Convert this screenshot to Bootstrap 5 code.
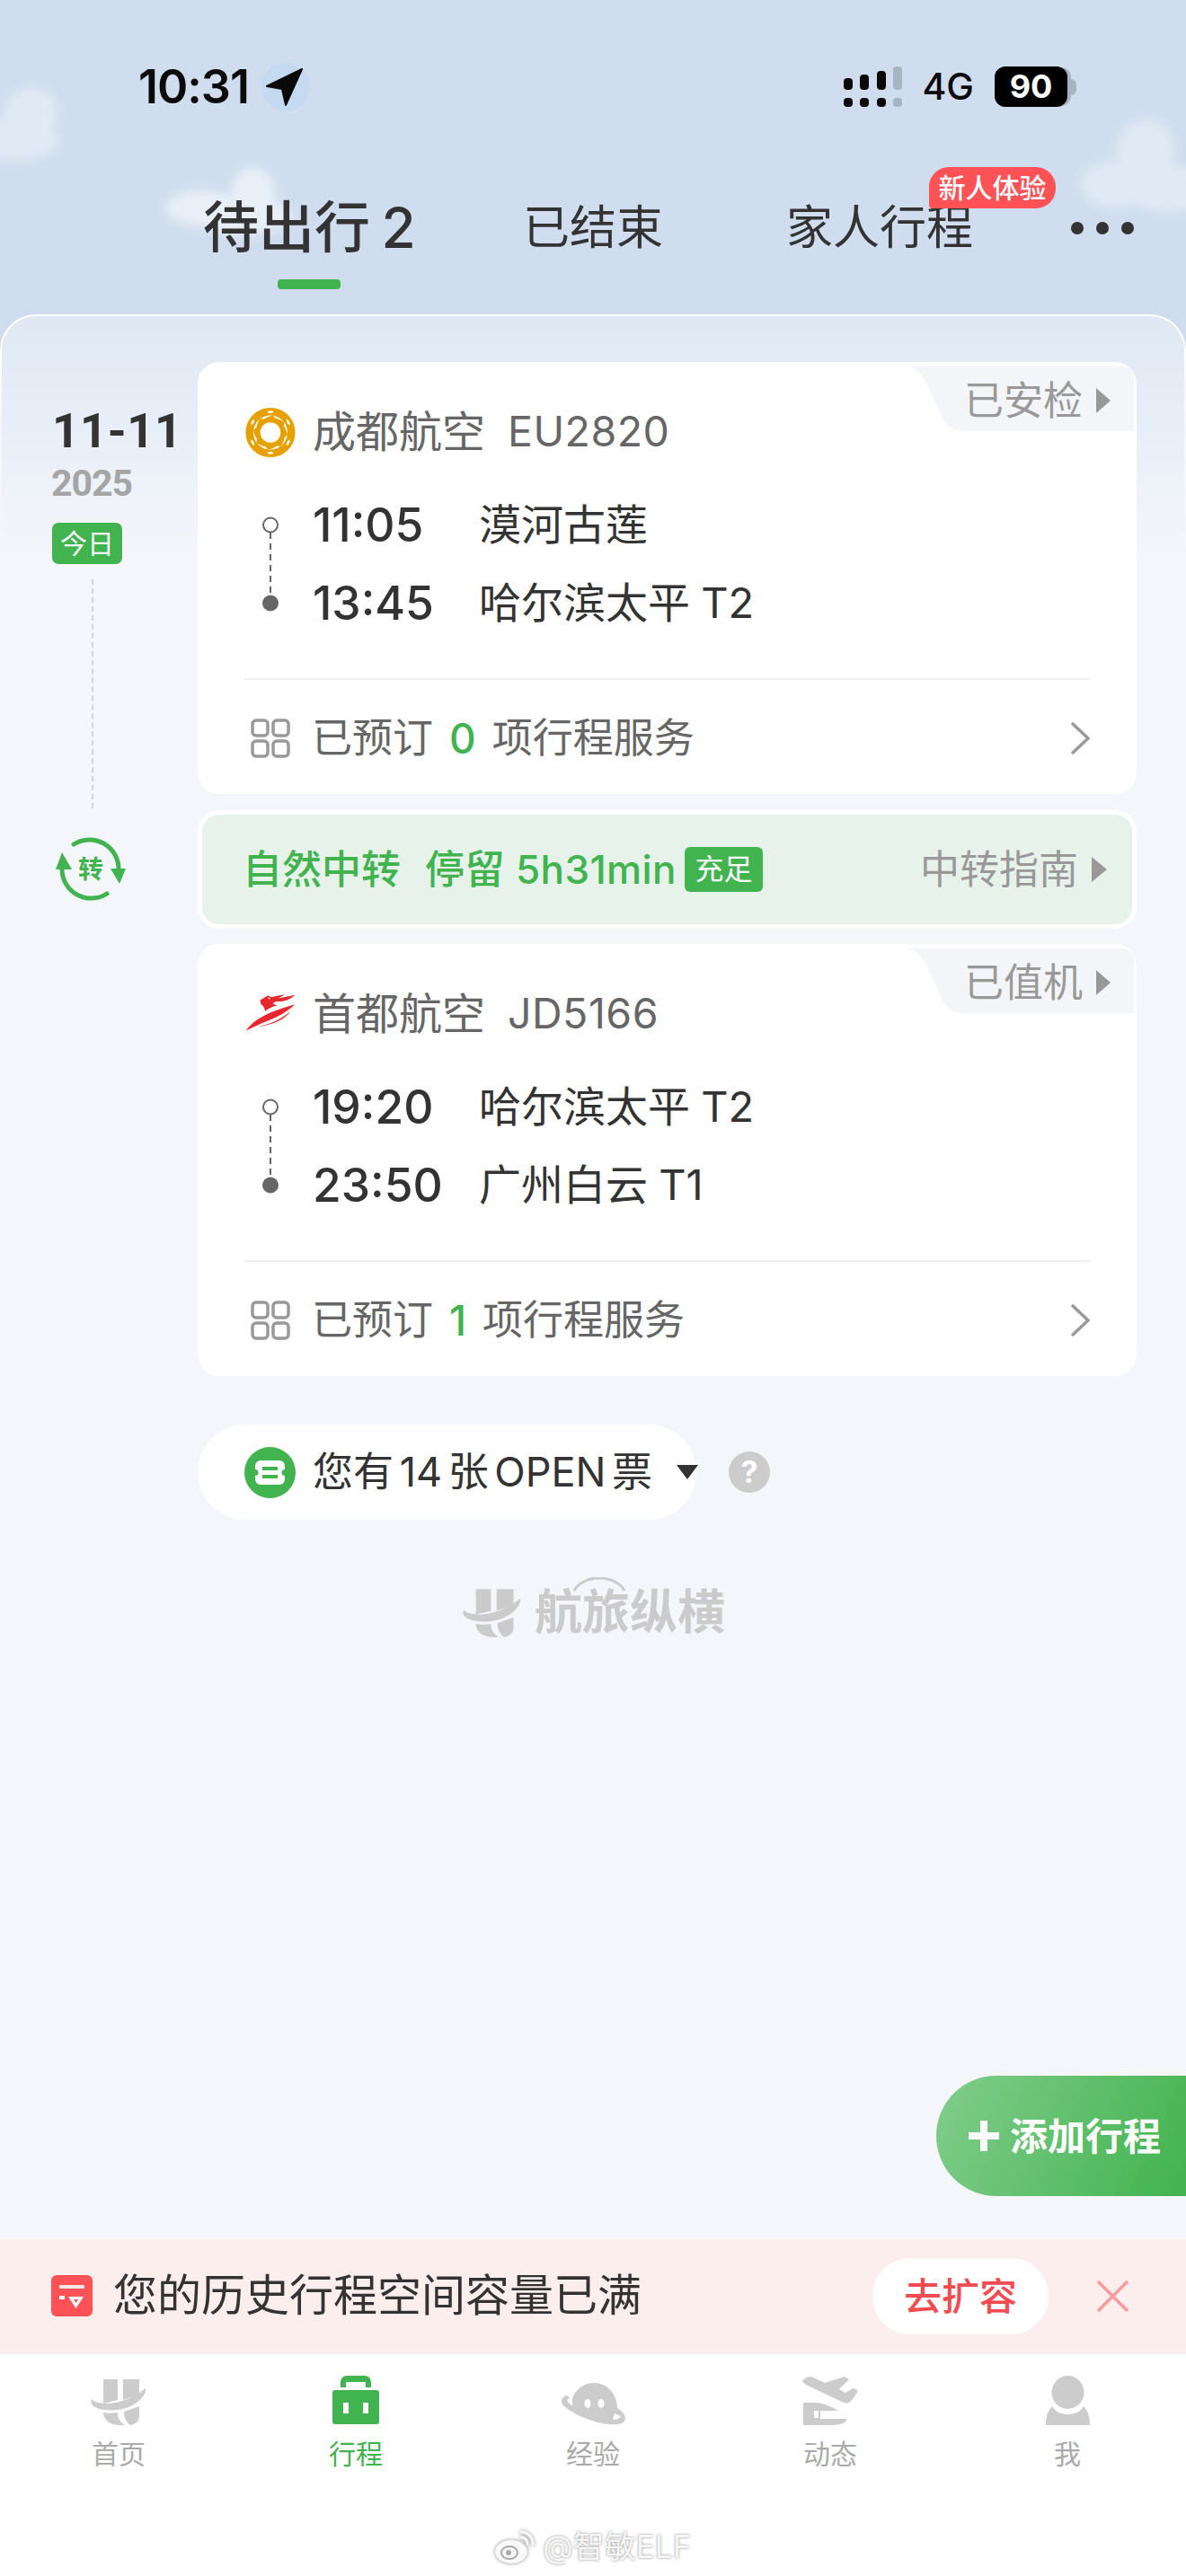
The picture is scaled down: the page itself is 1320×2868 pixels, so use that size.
<!DOCTYPE html>
<html lang="zh">
<head>
    <meta charset="UTF-8">
    <meta name="viewport" content="width=device-width, initial-scale=1.0">
    <title>行程</title>
    <!-- Bootstrap CSS -->
    <link href="https://cdn.jsdelivr.net/npm/bootstrap@5.3.0/dist/css/bootstrap.min.css" rel="stylesheet">
    <style>
        body { margin: 0; background: #fff; font-family: Inter, "Noto Sans CJK SC", sans-serif; color: #333; }
        svg { display: block; flex-shrink: 0; }
        .phone { width: 1320px; height: 2868px; background: #cfddee; overflow: hidden; }
        .sky-clouds { left: 0; top: 0; }

        /* status bar */
        .status-row { padding: 74px 122px 0 154px; height: 119px; }
        .status-time { font-size: 52px; font-weight: 600; color: #0a0a0a; line-height: 45px; letter-spacing: -1px; width: 132px; }
        .status-4g { font-size: 41px; font-weight: 500; color: #0a0a0a; line-height: 45px; margin: 0 23px 0 22px; }
        .batt-box { width: 81px; height: 45px; background: #000; border-radius: 12px; color: #fff; font-size: 36px; font-weight: 700; line-height: 45px; text-align: center; box-shadow: 5px 0 0 -1px #a9b4c2; }
        .batt-nub { width: 7px; height: 18px; background: #a9b4c2; border-radius: 0 6px 6px 0; margin-left: 3px; }

        /* tabs */
        .tab-row { margin-top: 105px; padding-left: 226px; height: 60px; }
        .tab-item { font-size: 52px; line-height: 60px; color: #333; white-space: nowrap; }
        .tab-active { font-size: 62px; font-weight: 500; width: 236px; word-spacing: -4px; }
        .tab-done { margin-left: 120px; width: 154px; }
        .tab-family { margin-left: 139px; width: 208px; }
        .tab-bar-mark { width: 70px; height: 11px; background: #41b34f; border-radius: 4px; margin: 27px 0 28px 309px; }
        .tab-new { left: 1034px; top: 186px; width: 141px; height: 46px; line-height: 46px; background: #ff5257; color: #fff; font-size: 30px; font-weight: 500; text-align: center; border-radius: 22px 22px 22px 4px; }
        .tab-dots { margin-left: 109px; gap: 14px; }
        .tab-dots i { width: 14px; height: 14px; background: #333; border-radius: 50%; display: block; }

        /* sheet */
        .sheet { height: 2143px; border: 2px solid transparent; border-bottom: 0; border-radius: 40px 40px 0 0; padding-top: 51px; padding-right: 53px; background: linear-gradient(180deg, #dfe8f4 0, #f4f6fb 270px) padding-box, linear-gradient(180deg, #fff 0, #f4f6fb 130px) border-box; }
        .date-col { width: 218px; padding-left: 56px; }
        .date-main { font-family: Roboto, sans-serif; font-size: 53px; font-weight: 700; line-height: 60px; margin-top: 47px; letter-spacing: .5px; white-space: nowrap; }
        .date-year { font-family: Roboto, sans-serif; font-size: 41px; font-weight: 700; color: #a5a5a5; line-height: 40px; margin-top: 8px; letter-spacing: -1px; margin-left: -1px; }
        .date-today { width: 78px; height: 46px; line-height: 46px; background: #41b34f; color: #fff; font-size: 30px; text-align: center; border-radius: 7px; margin-top: 24px; }
        .date-dash { border-left: 2px dashed #d2d4d8; margin: 17px 0 2px 44px; flex-grow: 1; }

        /* flight card */
        .flight-card { width: 1045px; height: 481px; border: 0; border-radius: 24px; padding: 50px 52px 0; background: #fff; }
        .flight-gap { margin-bottom: 18px; }
        .flight-head { height: 57px; gap: 18px; font-size: 48px; line-height: 57px; color: #666; }
        .flight-head span { padding-bottom: 3px; }
        .flight-no { font-size: 46.5px; margin-left: 7px; letter-spacing: .5px; }
        .flight-corner { right: 3px; top: 5px; width: 250px; height: 72px; }
        .corner-text { right: 26px; top: 8px; font-size: 44px; line-height: 60px; color: #999; gap: 15px; white-space: nowrap; }
        .leg-times { margin-top: 31px; height: 174px; }
        .leg-line { height: 87px; }
        .leg-time { width: 185px; margin-left: 18px; font-size: 51.5px; font-weight: 500; }
        .leg-port { font-size: 47px; white-space: nowrap; word-spacing: -1px; }
        .flight-line { height: 2px; background: #f0f0f0; margin-top: 40px; }
        .flight-foot { height: 127px; font-size: 45px; color: #666; padding: 3px 0 0 7px; }
        .foot-count { color: #41b34f; font-weight: 500; margin: 0 18px; font-size: 46px; }

        /* transfer */
        .transfer-icon { width: 218px; padding: 0 0 17px 47px; }
        .transfer-card { width: 1045px; height: 132px; background: #e7f2ea; border: 5px solid #fff; border-radius: 24px; padding: 0 28px 0 45px; margin-bottom: 17px; }
        .transfer-main { font-size: 44px; font-weight: 500; color: #41b34f; white-space: nowrap; }
        .transfer-stay { margin-left: 27px; letter-spacing: .4px; }
        .transfer-tag { background: #41b34f; color: #fff; font-size: 32px; font-weight: 400; height: 50px; width: 87px; line-height: 50px; border-radius: 6px; text-align: center; margin-left: 9px; letter-spacing: 0; }
        .transfer-guide { font-size: 44px; color: #999; gap: 15px; }

        /* open ticket */
        .open-row { margin-top: 54px; }
        .open-pill { width: 555px; height: 106px; background: #fff; border-radius: 53px; padding-left: 52px; gap: 19px; font-size: 45px; white-space: nowrap; word-spacing: -6px; }
        .open-arrow { margin-left: 8px; }
        .open-help { width: 46px; height: 46px; background: #ccc; color: #fff; border-radius: 50%; font-size: 34px; font-weight: 700; line-height: 46px; text-align: center; margin-left: 36px; }
        .brand-foot { margin: 76px 0 0 295px; gap: 14px; color: #cbcbcb; font-size: 53px; font-weight: 700; line-height: 55px; white-space: nowrap; }
        .brand-arc { left: 122px; top: -12px; }

        /* add button */
        .add-btn { left: 1042px; top: 2311px; width: 278px; height: 134px; border-radius: 67px 0 0 67px; border: 0; padding: 0 0 0 36px; gap: 12px; color: #fff; font-size: 42px; font-weight: 700; white-space: nowrap; background: linear-gradient(115deg, #82cd8c 0, #41b34f 100%); }
        .add-btn:hover { color: #fff; }

        /* notice */
        .notice { height: 126px; background: #fdeeee; padding-left: 57px; padding-right: 63px; }
        .notice-text { font-size: 49px; line-height: 60px; margin-left: 23px; white-space: nowrap; }
        .notice-btn { width: 196px; height: 85px; background: #fff; border: 0; border-radius: 42px; color: #f54a4f; font-size: 42px; font-weight: 500; padding: 0; margin-right: 53px; }
        .notice-btn:hover { background: #fff; color: #f54a4f; }

        /* tab bar */
        .foot-nav { height: 249px; border-top: 2px solid #f0f0f0; background: #fff; }
        .foot-item { width: 264px; height: 137px; color: #aaa; font-size: 30px; }
        .foot-icon { height: 79px; }
        .foot-label { line-height: 36px; margin-top: 14px; }
        .foot-on { color: #41b34f; }

        .mark-water { left: 550px; top: 2815px; gap: 8px; font-size: 35px; line-height: 40px; color: #f5f5f5; text-shadow: 0 0 3px #8a8a8a; white-space: nowrap; }
        .weibo-mark { filter: drop-shadow(0 0 2px #8a8a8a); }
    </style>
</head>
<body>
<div class="phone position-relative">

    <!-- clouds in the sky behind the tabs -->
    <svg class="sky-clouds position-absolute" width="1320" height="350">
        <defs><filter id="soft" x="-30%" y="-30%" width="160%" height="160%"><feGaussianBlur stdDeviation="6"/></filter></defs>
        <g fill="#fff" opacity=".38" filter="url(#soft)">
            <ellipse cx="35" cy="125" rx="30" ry="28"/><ellipse cx="18" cy="155" rx="48" ry="24"/>
            <ellipse cx="1275" cy="165" rx="32" ry="32"/><ellipse cx="1240" cy="205" rx="38" ry="26"/><ellipse cx="1300" cy="210" rx="50" ry="26"/>
        </g>
        <g fill="#fff" opacity=".55" filter="url(#soft)">
            <ellipse cx="282" cy="212" rx="24" ry="26"/><ellipse cx="225" cy="232" rx="40" ry="20"/><ellipse cx="270" cy="240" rx="55" ry="20"/>
        </g>
    </svg>

    <!-- status bar -->
    <div class="status-row d-flex align-items-center justify-content-between position-relative">
        <div class="d-flex align-items-center">
            <span class="status-time">10:31</span>
            <svg width="56" height="56" viewBox="0 0 56 56" class="ms-1">
                <circle cx="28" cy="28" r="27" fill="#c5d9f1"/>
                <path d="M46 8 L7 27 L24 30 L28 48z" fill="#0a0a0a" stroke="#0a0a0a" stroke-width="2" stroke-linejoin="round"/>
            </svg>
        </div>
        <div class="d-flex align-items-center">
            <svg width="65" height="45" viewBox="0 0 65 45">
                <g fill="#0a0a0a">
                    <rect x="0" y="13" width="10" height="13" rx="4"/><rect x="0" y="35" width="10" height="10" rx="4"/>
                    <rect x="18" y="9" width="10" height="17" rx="4"/><rect x="18" y="35" width="10" height="10" rx="4"/>
                    <rect x="37" y="5" width="10" height="21" rx="4"/><rect x="37" y="35" width="10" height="10" rx="4"/>
                </g>
                <g fill="#a9b4c2"><rect x="55" y="0" width="10" height="26" rx="4"/><rect x="55" y="35" width="10" height="10" rx="4"/></g>
            </svg>
            <span class="status-4g">4G</span>
            <span class="batt-box">90</span>
            <span class="batt-nub"></span>
        </div>
    </div>

    <!-- top tabs -->
    <div class="tab-row d-flex align-items-center position-relative">
        <span class="tab-item tab-active">待出行 2</span>
        <span class="tab-item tab-done">已结束</span>
        <span class="tab-item tab-family">家人行程</span>
        <span class="tab-dots d-flex"><i></i><i></i><i></i></span>
    </div>
    <div class="tab-bar-mark position-relative"></div>
    <span class="tab-new position-absolute">新人体验</span>

    <!-- itinerary sheet -->
    <div class="sheet position-relative">
        <div class="d-flex">
            <div class="date-col d-flex flex-column">
                <div class="date-main">11-11</div>
                <div class="date-year">2025</div>
                <div class="date-today">今日</div>
                <div class="date-dash"></div>
            </div>
            <div class="card flight-card flight-gap position-relative">
                <div class="flight-corner position-absolute">
                    <svg width="250" height="72" viewBox="0 0 250 72"><path d="M0 0 H236 Q250 0 250 14 V72 H62 Q44 72 36 56 L20 20 Q12 4 0 0z" fill="#f4f5f8"/></svg>
                    <div class="corner-text position-absolute d-flex align-items-center">已安检
                        <svg width="16" height="28" viewBox="0 0 16 28"><path d="M0 0 L16 14 L0 28z" fill="#999"/></svg>
                    </div>
                </div>
                <div class="flight-head d-flex align-items-center">
                    <svg width="58" height="57" viewBox="-30 -30 60 60">
                        <defs>
                            <path id="blade" d="M3 -20 C-8 -18 -14 -12 -12 -2 C-10 -9 -4 -13 6 -16z" fill="#e6a000"/>
                            <path id="fleck" d="M-4 -24 q4 -3 8 0 q-4 3 -8 0" fill="#fff"/>
                        </defs>
                        <circle r="24.5" fill="none" stroke="#e6a000" stroke-width="9"/>
                        <use href="#blade"/><use href="#blade" transform="rotate(45)"/><use href="#blade" transform="rotate(90)"/><use href="#blade" transform="rotate(135)"/><use href="#blade" transform="rotate(180)"/><use href="#blade" transform="rotate(225)"/><use href="#blade" transform="rotate(270)"/><use href="#blade" transform="rotate(315)"/>
                        <use href="#fleck"/><use href="#fleck" transform="rotate(60)"/><use href="#fleck" transform="rotate(120)"/><use href="#fleck" transform="rotate(180)"/><use href="#fleck" transform="rotate(240)"/><use href="#fleck" transform="rotate(300)"/>
                    </svg>
                    <span>成都航空</span><span class="flight-no">EU2820</span>
                </div>
                <div class="leg-times d-flex">
                    <svg width="58" height="174" viewBox="0 0 58 174">
                        <line x1="29" y1="52" x2="29" y2="122" stroke="#666" stroke-width="2" stroke-dasharray="7 5"/>
                        <circle cx="29" cy="43.5" r="8" fill="#fff" stroke="#666" stroke-width="2"/>
                        <circle cx="29" cy="130.5" r="9" fill="#666"/>
                    </svg>
                    <div>
                        <div class="leg-line d-flex align-items-center"><span class="leg-time">11:05</span><span class="leg-port">漠河古莲</span></div>
                        <div class="leg-line d-flex align-items-center"><span class="leg-time">13:45</span><span class="leg-port">哈尔滨太平 T2</span></div>
                    </div>
                </div>
                <div class="flight-line"></div>
                <div class="flight-foot d-flex align-items-center justify-content-between">
                    <div class="d-flex align-items-center">
                        <svg width="44" height="44" viewBox="0 0 44 44" class="me-4" fill="none" stroke="#999" stroke-width="3.5"><rect x="2" y="2" width="17" height="17" rx="4"/><rect x="25" y="2" width="17" height="17" rx="4"/><rect x="2" y="25" width="17" height="17" rx="4"/><rect x="25" y="25" width="17" height="17" rx="4"/></svg>
                        <span>已预订</span><span class="foot-count">0</span><span>项行程服务</span>
                    </div>
                    <svg width="22" height="38" viewBox="0 0 22 38" fill="none" stroke="#999" stroke-width="3.5"><path d="M2 2 L20 19 L2 36"/></svg>
                </div>
            </div>
        </div>

        <div class="d-flex">
            <div class="transfer-icon d-flex align-items-center">
                <svg width="110" height="100" viewBox="0 0 110 100">
                    <g fill="none" stroke="#41b34f" stroke-width="5" stroke-linecap="round">
                        <path d="M33 22 A32.5 32.5 0 0 1 83 50"/>
                        <path d="M70 77 A32.5 32.5 0 0 1 20 50"/>
                    </g>
                    <path d="M74 49 L91 49 L84 66z M13 50 L31 50 L20 31z" fill="#41b34f"/>
                    <text x="52" y="60" text-anchor="middle" font-size="28" font-weight="700" fill="#41b34f" font-family="Noto Sans CJK SC, sans-serif">转</text>
                </svg>
            </div>
            <div class="transfer-card d-flex align-items-center justify-content-between">
                <div class="transfer-main d-flex align-items-center"><span>自然中转</span><span class="transfer-stay">停留 5h31min</span><span class="transfer-tag">充足</span></div>
                <div class="transfer-guide d-flex align-items-center">中转指南
                    <svg width="17" height="28" viewBox="0 0 17 28"><path d="M0 0 L17 14 L0 28z" fill="#999"/></svg>
                </div>
            </div>
        </div>

        <div class="d-flex">
            <div class="date-col"></div>
            <div>
                <div class="card flight-card position-relative">
                    <div class="flight-corner position-absolute">
                        <svg width="250" height="72" viewBox="0 0 250 72"><path d="M0 0 H236 Q250 0 250 14 V72 H62 Q44 72 36 56 L20 20 Q12 4 0 0z" fill="#f4f5f8"/></svg>
                        <div class="corner-text position-absolute d-flex align-items-center">已值机
                            <svg width="16" height="28" viewBox="0 0 16 28"><path d="M0 0 L16 14 L0 28z" fill="#999"/></svg>
                        </div>
                    </div>
                    <div class="flight-head d-flex align-items-center">
                        <svg width="58" height="57" viewBox="35 30 175 172">
                            <g fill="#e8262d">
                                <path d="M40 170 C70 130 120 105 205 82 C185 100 165 115 130 130 C100 142 70 155 40 170z"/>
                                <path d="M80 158 C110 150 150 140 190 105 C170 135 130 150 80 158z"/>
                                <path d="M88 68 L115 52 L125 58 L170 48 L150 62 L205 50 C190 65 165 75 140 72 L130 80 L145 85 C125 90 110 100 105 105 L100 90 L90 80z"/>
                            </g>
                            <circle cx="118" cy="62" r="3" fill="#fff"/>
                        </svg>
                        <span>首都航空</span><span class="flight-no">JD5166</span>
                    </div>
                    <div class="leg-times d-flex">
                        <svg width="58" height="174" viewBox="0 0 58 174">
                            <line x1="29" y1="52" x2="29" y2="122" stroke="#666" stroke-width="2" stroke-dasharray="7 5"/>
                            <circle cx="29" cy="43.5" r="8" fill="#fff" stroke="#666" stroke-width="2"/>
                            <circle cx="29" cy="130.5" r="9" fill="#666"/>
                        </svg>
                        <div>
                            <div class="leg-line d-flex align-items-center"><span class="leg-time">19:20</span><span class="leg-port">哈尔滨太平 T2</span></div>
                            <div class="leg-line d-flex align-items-center"><span class="leg-time">23:50</span><span class="leg-port">广州白云 T1</span></div>
                        </div>
                    </div>
                    <div class="flight-line"></div>
                    <div class="flight-foot d-flex align-items-center justify-content-between">
                        <div class="d-flex align-items-center">
                            <svg width="44" height="44" viewBox="0 0 44 44" class="me-4" fill="none" stroke="#999" stroke-width="3.5"><rect x="2" y="2" width="17" height="17" rx="4"/><rect x="25" y="2" width="17" height="17" rx="4"/><rect x="2" y="25" width="17" height="17" rx="4"/><rect x="25" y="25" width="17" height="17" rx="4"/></svg>
                            <span>已预订</span><span class="foot-count">1</span><span>项行程服务</span>
                        </div>
                        <svg width="22" height="38" viewBox="0 0 22 38" fill="none" stroke="#999" stroke-width="3.5"><path d="M2 2 L20 19 L2 36"/></svg>
                    </div>
                </div>

                <div class="d-flex align-items-center open-row">
                    <div class="open-pill d-flex align-items-center">
                        <svg width="57" height="57" viewBox="0 0 57 57">
                            <circle cx="28.5" cy="28.5" r="28.5" fill="#41b34f"/>
                            <rect x="12" y="15" width="33" height="27" rx="6" fill="#fff"/>
                            <circle cx="12" cy="28.5" r="3.5" fill="#41b34f"/><circle cx="45" cy="28.5" r="3.5" fill="#41b34f"/>
                            <rect x="20" y="22" width="17" height="4" fill="#41b34f"/><rect x="20" y="31" width="17" height="4" fill="#41b34f"/>
                        </svg>
                        <span>您有 14 张 OPEN 票</span>
                        <svg width="24" height="16" viewBox="0 0 24 16" class="open-arrow"><path d="M0 0 H24 L12 16z" fill="#333"/></svg>
                    </div>
                    <div class="open-help">?</div>
                </div>

                <div class="brand-foot d-flex align-items-center position-relative">
                    <svg width="66" height="55" viewBox="0 0 63 52" fill="#cbcbcb"><use href="#hLogo"/></svg>
                    <span>航旅纵横</span>
                    <svg class="brand-arc position-absolute" width="60" height="16" viewBox="0 0 60 16" fill="none" stroke="#cbcbcb" stroke-width="3"><path d="M2 15 A30 22 0 0 1 58 15"/></svg>
                </div>
            </div>
        </div>
    </div>

    <button class="btn add-btn position-absolute d-flex align-items-center" type="button">
        <svg width="34" height="34" viewBox="0 0 34 34"><path d="M13 0 H21 V13 H34 V21 H21 V34 H13 V21 H0 V13 H13z" fill="#fff"/></svg>
        添加行程
    </button>

    <!-- notice -->
    <div class="notice d-flex align-items-center">
        <svg width="46" height="46" viewBox="0 0 46 46">
            <rect width="46" height="46" rx="6" fill="#ff5257"/>
            <rect x="9" y="11" width="28" height="4" rx="1" fill="#fff" opacity=".85"/>
            <rect x="9" y="23" width="6" height="4" fill="#fff"/>
            <path d="M19 24 H36 L27.5 37z" fill="#fff"/>
            <path d="M25 27 H30 L27.5 31z" fill="#ff5257"/>
        </svg>
        <span class="notice-text flex-grow-1">您的历史行程空间容量已满</span>
        <button class="btn notice-btn" type="button">去扩容</button>
        <svg width="37" height="37" viewBox="0 0 37 37" fill="none" stroke="#ff9a9c" stroke-width="3.5"><path d="M2 2 L35 35 M35 2 L2 35"/></svg>
    </div>

    <!-- bottom tab bar -->
    <div class="foot-nav d-flex">
        <svg width="0" height="0" class="position-absolute">
            <defs>
                <g id="hLogo">
                    <path d="M14 1 H30 V24 L14 28z M36 1 H54 V18 L36 24z"/>
                    <path d="M1 23 C6 30 36 32 61 11 C63 18 50 33 30 35 C14 37 -3 33 1 23z"/>
                    <path d="M14 38 C20 39 25 39 30 38 C30 44 32 48 38 52 C24 53 14 48 14 38z"/>
                    <path d="M37 37 L54 31 V41 C54 48 50 51 44 52 C39 48 37 44 37 37z"/>
                </g>
            </defs>
        </svg>
        <div class="foot-item d-flex flex-column align-items-center">
            <div class="foot-icon d-flex align-items-end"><svg width="63" height="52" viewBox="0 0 63 52" fill="#ccc"><use href="#hLogo"/></svg></div>
            <div class="foot-label">首页</div>
        </div>
        <div class="foot-item foot-on d-flex flex-column align-items-center">
            <div class="foot-icon d-flex align-items-end">
                <svg width="52" height="56" viewBox="0 0 52 56" fill="#41b34f">
                    <path d="M9 14 V8 A7 7 0 0 1 16 1 H36 A7 7 0 0 1 43 8 V14 H37 V8 H15 V14z"/>
                    <path d="M3 17 H49 A3 3 0 0 1 52 20 V52 A3 3 0 0 1 49 55 H3 A3 3 0 0 1 0 52 V20 A3 3 0 0 1 3 17z M12 31 V43 H18 V31z M34 31 V43 H40 V31z" fill-rule="evenodd"/>
                </svg>
            </div>
            <div class="foot-label">行程</div>
        </div>
        <div class="foot-item d-flex flex-column align-items-center">
            <div class="foot-icon d-flex align-items-end">
                <svg width="71" height="47" viewBox="0 0 71 47" fill="#ccc">
                    <path d="M12 18 C15 7 25 0 37 0 C50 0 62 12 62 28 C68 32 71 36 71 40 C70 46 62 47 52 46 C32 44 10 33 2 25 C-2 20 1 15 6 14 L9 17 C6 18 5 20 8 22 L12 26z" fill-rule="evenodd"/>
                    <ellipse cx="29" cy="23" rx="3.5" ry="5" fill="#fff"/><ellipse cx="44" cy="23" rx="3.5" ry="5" fill="#fff"/>
                    <path d="M59 34 L66 37 C65 40 61 41 57 41z" fill="#fff"/>
                </svg>
            </div>
            <div class="foot-label">经验</div>
        </div>
        <div class="foot-item d-flex flex-column align-items-center">
            <div class="foot-icon d-flex align-items-end">
                <svg width="63" height="54" viewBox="0 0 63 54" fill="#ccc">
                    <path d="M0 6 C2 0 10 -1 14 2 L25 7 L47 0 L52 3 L41 14 L48 18 L56 13 L62 15 C60 20 56 26 52 29 C49 30 46 29 44 28 L4 9z"/>
                    <path d="M1 29 H14 C24 29 35 35 40 38 H20 V47 H49 V48 C49 52 40 54 30 54 H1z M13 38 V46 H18 V38z" fill-rule="evenodd"/>
                </svg>
            </div>
            <div class="foot-label">动态</div>
        </div>
        <div class="foot-item d-flex flex-column align-items-center">
            <div class="foot-icon d-flex align-items-end">
                <svg width="49" height="55" viewBox="0 0 49 55" fill="#ccc">
                    <ellipse cx="24.5" cy="18.5" rx="18" ry="18.5"/>
                    <path d="M0 55 C0 46 2 39 7 34 C11 41 18 43 24.5 43 C31 43 38 41 42 34 C47 39 49 46 49 55z"/>
                </svg>
            </div>
            <div class="foot-label">我</div>
        </div>
    </div>

    <!-- repost watermark -->
    <div class="mark-water position-absolute d-flex align-items-center">
        <svg width="46" height="40" viewBox="0 0 46 40" class="weibo-mark">
            <ellipse cx="19" cy="26" rx="18" ry="13" fill="#f8f8f8"/>
            <ellipse cx="17" cy="27" rx="9" ry="7" fill="none" stroke="#aaa" stroke-width="2"/>
            <circle cx="16" cy="27" r="3" fill="#aaa"/>
            <path d="M30 4 A13 13 0 0 1 43 18 M30 10 A7 7 0 0 1 37 18" fill="none" stroke="#f8f8f8" stroke-width="3" stroke-linecap="round"/>
        </svg>
        <span>@智敏ELF</span>
    </div>
</div>
    <!-- Bootstrap JS Bundle with Popper -->
    <script src="https://cdn.jsdelivr.net/npm/bootstrap@5.3.0/dist/js/bootstrap.bundle.min.js"></script>
</body>
</html>
